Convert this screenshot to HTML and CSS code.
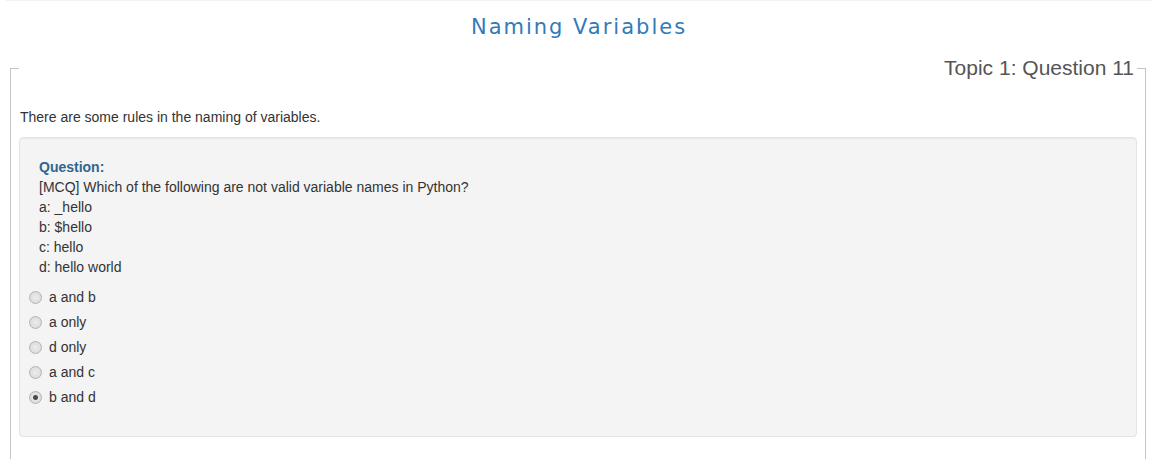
FILE: index.html
```html
<!DOCTYPE html>
<html lang="en">
<head>
<meta charset="utf-8">
<title>Naming Variables</title>
<link rel="stylesheet" href="styles.css">
</head>
<body>
<div class="topbar"></div>
<h1 class="title">Naming Variables</h1>
<fieldset class="topic">
  <legend class="topic-legend">Topic 1: Question 11</legend>
  <p class="intro">There are some rules in the naming of variables.</p>
  <div class="well">
    <div class="question">
      <div class="q-label">Question:</div>
      <div>[MCQ] Which of the following are not valid variable names in Python?</div>
      <div>a: _hello</div>
      <div>b: $hello</div>
      <div>c: hello</div>
      <div>d: hello world</div>
    </div>
    <div class="options">
      <label class="option"><input class="radio" type="radio" name="ans"><span>a and b</span></label>
      <label class="option"><input class="radio" type="radio" name="ans"><span>a only</span></label>
      <label class="option"><input class="radio" type="radio" name="ans"><span>d only</span></label>
      <label class="option"><input class="radio" type="radio" name="ans"><span>a and c</span></label>
      <label class="option"><input class="radio" type="radio" name="ans" checked><span>b and d</span></label>
    </div>
  </div>
</fieldset>
</body>
</html>
```
FILE: styles.css
```css
html, body {
  margin: 0;
  padding: 0;
  background: #fff;
}
body {
  font-family: "Liberation Sans", Arial, sans-serif;
  font-size: 14px;
  line-height: 20px;
  color: #333;
}
.topbar {
  height: 1px;
  margin: 0 6px;
  background: #f2f2f2;
}
.title {
  margin: 11px 0 0;
  font-family: "DejaVu Sans", sans-serif;
  font-weight: normal;
  font-size: 21px;
  line-height: 30px;
  letter-spacing: 2px;
  text-align: center;
  color: #337ab7;
}
.topic {
  margin: 15px 12px 0 10px;
  padding: 0 8px;
  border: 1px solid #c4c4c4;
  min-width: 0;
}
.topic-legend {
  box-sizing: border-box;
  width: 100%;
  padding: 0 3px 0 0;
  text-align: right;
  font-size: 21px;
  line-height: 22px;
  color: #555;
}
.intro {
  margin: 28px 0 10px;
  padding-left: 1px;
}
.well {
  margin-bottom: 40px;
  padding: 19px;
  background: #f4f4f4;
  border: 1px solid #e3e3e3;
  border-radius: 4px;
  box-shadow: inset 0 1px 1px rgba(0, 0, 0, 0.05);
}
.q-label {
  font-weight: bold;
  color: #31658f;
}
.options {
  display: flex;
  flex-direction: column;
  gap: 5px;
  margin: 10px 0 10px -10px;
}
.option {
  display: flex;
  align-items: center;
  height: 20px;
}
.radio {
  appearance: none;
  -webkit-appearance: none;
  box-sizing: border-box;
  width: 13px;
  height: 13px;
  margin: 0 7px 0 0;
  border: 1px solid #b4b4b4;
  border-radius: 50%;
  background: radial-gradient(circle at 50% 50%, #ececec 0, #dedede 5px, #d2d2d2 6px);
}
.radio:checked {
  background:
    radial-gradient(circle at 50% 50%, #4a4a4a 0, #4a4a4a 2px, rgba(74, 74, 74, 0) 3px),
    radial-gradient(circle at 50% 50%, #ececec 0, #dedede 5px, #d2d2d2 6px);
}
```
